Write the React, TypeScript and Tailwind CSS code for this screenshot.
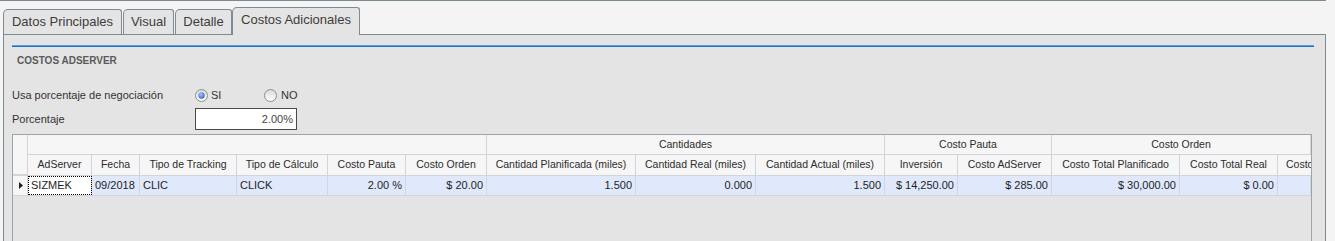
import React from 'react';

type Col = { label: string; w: string; align: 'left' | 'right' | 'center'; value: string };

const cols: Col[] = [
  { label: 'AdServer', w: 'w-[64px]', align: 'left', value: 'SIZMEK' },
  { label: 'Fecha', w: 'w-[48px]', align: 'left', value: '09/2018' },
  { label: 'Tipo de Tracking', w: 'w-[97px]', align: 'left', value: 'CLIC' },
  { label: 'Tipo de Cálculo', w: 'w-[91px]', align: 'left', value: 'CLICK' },
  { label: 'Costo Pauta', w: 'w-[78px]', align: 'right', value: '2.00 %' },
  { label: 'Costo Orden', w: 'w-[81px]', align: 'right', value: '$ 20.00' },
  { label: 'Cantidad Planificada (miles)', w: 'w-[149px]', align: 'right', value: '1.500' },
  { label: 'Cantidad Real (miles)', w: 'w-[120px]', align: 'right', value: '0.000' },
  { label: 'Cantidad Actual (miles)', w: 'w-[129px]', align: 'right', value: '1.500' },
  { label: 'Inversión', w: 'w-[73px]', align: 'right', value: '$ 14,250.00' },
  { label: 'Costo AdServer', w: 'w-[94px]', align: 'right', value: '$ 285.00' },
  { label: 'Costo Total Planificado', w: 'w-[128px]', align: 'right', value: '$ 30,000.00' },
  { label: 'Costo Total Real', w: 'w-[98px]', align: 'right', value: '$ 0.00' },
  { label: 'Costo', w: 'w-[33px]', align: 'right', value: '' },
];

const bands = [
  { label: '', w: 'w-[459px]' },
  { label: 'Cantidades', w: 'w-[398px]' },
  { label: 'Costo Pauta', w: 'w-[167px]' },
  { label: 'Costo Orden', w: 'w-[259px]' },
];

const Radio = ({ checked }: { checked: boolean }) => (
  <svg width="13" height="13" viewBox="0 0 13 13" className="shrink-0">
    <defs>
      <linearGradient id={checked ? 'rg1' : 'rg0'} x1="0" y1="0" x2="0" y2="1">
        <stop offset="0" stopColor="#d9d9d9" />
        <stop offset="1" stopColor="#ffffff" />
      </linearGradient>
      <radialGradient id="dot" cx="0.4" cy="0.35" r="0.7">
        <stop offset="0" stopColor="#a9c8f5" />
        <stop offset="1" stopColor="#2b64c8" />
      </radialGradient>
    </defs>
    <circle cx="6.5" cy="6.5" r="6" fill={`url(#${checked ? 'rg1' : 'rg0'})`} stroke="#8c8c8c" />
    {checked && <circle cx="6.5" cy="6.5" r="3.2" fill="url(#dot)" />}
  </svg>
);

const Tab = ({ label, w, active }: { label: string; w: string; active?: boolean }) => (
  <div
    className={`${w} flex items-center justify-center border border-[#7d8b92] bg-[#e4e4e4] rounded-tl-[5px] rounded-tr-[3px] text-[13px] text-[#3c3c3c] ${
      active ? 'h-[28px] border-b-0 relative z-10 -mb-px pb-[4px]' : 'h-[25px] border-b-0'
    }`}
  >
    {label}
  </div>
);

export default function App() {
  return (
    <div className="w-[1335px] h-[241px] overflow-hidden bg-[#f4f4f4] font-['Liberation_Sans',Arial,sans-serif]">
      <div className="w-[1326px] h-px bg-[#7b8a92]" />
      <div className="flex items-end h-[33px] pl-[3px]">
        <Tab label="Datos Principales" w="w-[119px]" />
        <div className="w-px" />
        <Tab label="Visual" w="w-[51px]" />
        <div className="w-px" />
        <Tab label="Detalle" w="w-[57px]" />
        <Tab label="Costos Adicionales" w="w-[128px]" active />
      </div>
      <div className="ml-[3px] w-[1323px] h-[300px] border border-[#7d8b92] bg-[#e4e4e4]">
        <div className="ml-[8px] mt-[10px] w-[1302px]">
          <div className="h-px bg-[#5aa0dc]" />
          <div className="h-px bg-[#1a72c2]" />
        </div>
        <div className="ml-[13px] mt-[7px] h-[14px] leading-[14px] text-[10px] font-bold text-[#5a5a5a]">
          COSTOS ADSERVER
        </div>
        <div className="ml-[8px] mt-[19px] h-[16px] flex items-center text-[11px] text-[#333]">
          <div className="w-[183px]">Usa porcentaje de negociación</div>
          <div className="w-[69px] flex items-center gap-[3px]">
            <Radio checked />
            <span>SI</span>
          </div>
          <div className="flex items-center gap-[4px]">
            <Radio checked={false} />
            <span>NO</span>
          </div>
        </div>
        <div className="ml-[8px] mt-[5px] flex items-center text-[11px] text-[#333]">
          <div className="w-[183px]">Porcentaje</div>
          <div className="w-[102px] h-[22px] border border-[#4a4a4a] bg-white flex items-center justify-end pr-[3px] text-[#444]">
            2.00%
          </div>
        </div>

        <div className="ml-[8px] mt-[4px] w-[1300px] h-[200px] border border-[#9ea3ab] overflow-hidden text-[#2c2c2c]">
          <div className="flex">
            <div className="w-[15px] shrink-0 h-[40px] border-r border-b border-[#d2d4d9] bg-[#f6f6f6]" />
            <div className="flex flex-col">
              <div className="flex h-[20px] border-b border-[#d2d4d9] bg-[#f6f6f6] text-[10.5px]">
                {bands.map((b, i) => (
                  <div
                    key={i}
                    className={`${b.w} shrink-0 border-r border-[#d2d4d9] flex items-center justify-center`}
                  >
                    {b.label}
                  </div>
                ))}
              </div>
              <div className="flex h-[20px] bg-[#f6f6f6] text-[10.5px]">
                {cols.map((c, i) => (
                  <div
                    key={c.label}
                    className={`${c.w} shrink-0 flex items-center whitespace-nowrap overflow-hidden ${
                      i === cols.length - 1 ? 'pl-[8px]' : 'border-r border-[#d2d4d9] justify-center'
                    }`}
                  >
                    {c.label}
                  </div>
                ))}
              </div>
            </div>
          </div>
          <div className="flex h-[21px] border-t border-[#d2d4d9] border-b text-[11px] text-[#1e1e1e]">
            <div className="w-[15px] shrink-0 border-r border-[#d2d4d9] bg-[#f6f6f6] flex items-center pl-[6px]">
              <svg width="4" height="7" viewBox="0 0 4 7">
                <path d="M0 0 L4 3.5 L0 7 Z" fill="#222" />
              </svg>
            </div>
            {cols.map((c, i) => (
              <div
                key={c.label}
                className={`${c.w} shrink-0 border-r border-[#d2d6de] flex items-center whitespace-nowrap ${
                  c.align === 'right' ? 'justify-end pr-[3px]' : 'pl-[3px]'
                } ${i === 0 ? 'bg-white outline-1 outline-dotted outline-black -outline-offset-1' : 'bg-[#e0e9fb]'}`}
              >
                {c.value}
              </div>
            ))}
          </div>
        </div>
      </div>
    </div>
  );
}
